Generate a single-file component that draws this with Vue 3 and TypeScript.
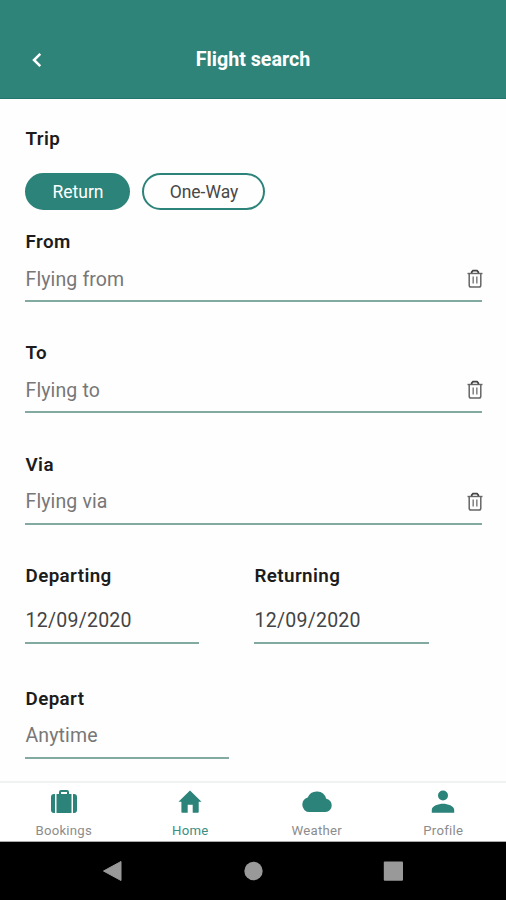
<script setup lang="ts">
import { ref } from 'vue'

interface Place {
  label: string
  hint: string
}

interface Tab {
  name: string
  width: number
  height: number
  path: string
}

const trips: string[] = ['Return', 'One-Way']
const trip = ref('Return')

const places: Place[] = [
  { label: 'From', hint: 'Flying from' },
  { label: 'To', hint: 'Flying to' },
  { label: 'Via', hint: 'Flying via' },
]

const dates = [
  { label: 'Departing', value: '12/09/2020' },
  { label: 'Returning', value: '12/09/2020' },
]

const tabs: Tab[] = [
  {
    name: 'Bookings',
    width: 28,
    height: 24,
    path: 'M5 4V23H4a3 3 0 0 1-3-3V7a3 3 0 0 1 3-3ZM6.500 4H9V2a2 2 0 0 1 2-2h6a2 2 0 0 1 2 2v2h2.500V23H6.500ZM11 2V4h6V2ZM23 4h1a3 3 0 0 1 3 3V20a3 3 0 0 1-3 3h-1Z',
  },
  {
    name: 'Home',
    width: 24,
    height: 24,
    path: 'M12 .5 23.500 11.700H20.700V22a.8.8 0 0 1-.8.8H14.700V14.800H9.700V22.800H4.200a.8.8 0 0 1-.8-.8V11.700H.5Z',
  },
  {
    name: 'Weather',
    width: 30,
    height: 24,
    path: 'M24.200 8.800A9.800 9.800 0 0 0 5.700 7.600 7.700 7.700 0 0 0 .3 14.500a7.300 7.300 0 0 0 7.400 7.600H23.400a6.600 6.600 0 0 0 6.300-6.700 6.500 6.500 0 0 0-5.500-6.600Z',
  },
  {
    name: 'Profile',
    width: 24,
    height: 24,
    path: 'M12 .5a5 5 0 1 0 0 10 5 5 0 0 0 0-10ZM12 13.800c-4.500 0-11.200 2.200-11.200 6v3h22.400v-3c0-3.800-6.700-6-11.200-6Z',
  },
]
const activeTab = ref('Home')
</script>

<template>
  <div class="screen">
    <header class="header">
      <button class="back" aria-label="Back">
        <svg width="12" height="16" viewBox="0 0 12 16">
          <path d="M9.300 1.800 3 8l6.300 6.200" fill="none" stroke="#fff" stroke-width="2.500" />
        </svg>
      </button>
      <h1 class="title">Flight search</h1>
    </header>

    <main class="form">
      <h2 class="label trip-label">Trip</h2>
      <div class="pills">
        <button
          v-for="t in trips"
          :key="t"
          class="pill"
          :class="{ selected: trip === t }"
          @click="trip = t"
        >{{ t }}</button>
      </div>

      <section v-for="p in places" :key="p.label" class="place">
        <h2 class="label">{{ p.label }}</h2>
        <div class="field">
          <span class="hint">{{ p.hint }}</span>
          <svg class="trash" width="16" height="20" viewBox="0 0 16 20" fill="none" stroke="#666">
            <path d="M.5 4.500H15.500" stroke-width="1.400" />
            <path d="M4.700 4V3L6 1.600H10L11.300 3V4" stroke-width="1.800" stroke="#444" />
            <path d="M2.200 5V16.200a1.800 1.800 0 0 0 1.800 1.800H12a1.800 1.800 0 0 0 1.800-1.800V5" stroke-width="1.500" />
            <path d="M6.200 7.500V14.500M9.800 7.500V14.500" stroke-width="1.600" stroke="#888" />
          </svg>
        </div>
      </section>

      <div class="dates">
        <section v-for="d in dates" :key="d.label">
          <h2 class="label">{{ d.label }}</h2>
          <div class="field date">{{ d.value }}</div>
        </section>
      </div>

      <section class="time">
        <h2 class="label">Depart</h2>
        <div class="field"><span class="hint">Anytime</span></div>
      </section>
    </main>

    <nav class="tabs">
      <button
        v-for="tab in tabs"
        :key="tab.name"
        class="tab"
        :class="{ active: activeTab === tab.name }"
        @click="activeTab = tab.name"
      >
        <svg :width="tab.width" :height="tab.height" :viewBox="`0 0 ${tab.width} ${tab.height}`">
          <path :d="tab.path" fill="#2b8379" fill-rule="evenodd" />
        </svg>
        <span>{{ tab.name }}</span>
      </button>
    </nav>

    <footer class="system">
      <svg width="20" height="22" viewBox="0 0 20 22">
        <path d="M18 1.500V20.500L.5 11Z" fill="#999" stroke="#999" stroke-linejoin="round" />
      </svg>
      <svg width="20" height="22" viewBox="0 0 20 22">
        <circle cx="10.500" cy="11" r="9.200" fill="#999" />
      </svg>
      <svg width="20" height="22" viewBox="0 0 20 22">
        <rect x=".8" y="1.500" width="19.200" height="19.200" rx="1" fill="#999" />
      </svg>
    </footer>
  </div>
</template>

<style>
body {
  margin: 0;
  background: #fff;
}
</style>

<style scoped>
.screen {
  display: flex;
  flex-direction: column;
  width: 506px;
  height: 900px;
  overflow: hidden;
  background: #fefefe;
  color: #1c1c1c;
  font-family: Roboto, sans-serif;
}
button {
  margin: 0;
  border: 0;
  padding: 0;
  background: none;
  font-family: inherit;
}
.header {
  display: grid;
  grid-template-columns: 50px 1fr 50px;
  align-items: center;
  box-sizing: border-box;
  height: 99px;
  padding-top: 21px;
  border-bottom: 1px solid #21766c;
  background: #2f847a;
  color: #fff;
}
.back {
  display: flex;
  justify-content: flex-end;
  padding: 1px 7px 0 0;
}
.title {
  margin: 0;
  font-size: 19.700px;
  font-weight: 700;
  line-height: 24px;
  text-align: center;
}
.form {
  flex: 1;
  box-sizing: border-box;
  padding: 27px 24px 0 25px;
}
.label {
  margin: 0;
  padding-left: 0.500px;
  font-size: 18.800px;
  font-weight: 600;
  line-height: 24px;
  letter-spacing: 0.400px;
}
.trip-label {
  padding-top: 1px;
}
.pills {
  display: flex;
  gap: 12px;
  height: 37px;
  margin: 22px 0 20px;
}
.pill {
  box-sizing: border-box;
  width: 123px;
  padding-left: 1px;
  border: 2px solid #2b8379;
  border-radius: 19px;
  color: #484848;
  font-size: 17.500px;
  letter-spacing: 0;
}
.pill.selected {
  width: 105px;
  background: #2b8379;
  color: #fff;
}
.place {
  height: 111.300px;
}
.field {
  display: flex;
  align-items: center;
  justify-content: space-between;
  box-sizing: border-box;
  height: 48px;
  padding: 4px 0 0 0.500px;
  border-bottom: 2px solid #82aaa1;
  font-size: 19.500px;
  letter-spacing: 0.120px;
}
.trash {
  margin-right: -1px;
}
.hint {
  color: #777;
}
.date {
  letter-spacing: 0.250px;
}
.dates {
  display: grid;
  grid-template-columns: 174px 175px;
  column-gap: 55px;
  height: 123px;
}
.field.date {
  height: 56px;
  padding-top: 12px;
  color: #444;
}
.time {
  width: 204px;
}
.tabs {
  display: grid;
  grid-template-columns: repeat(4, 1fr);
  box-sizing: border-box;
  height: 61px;
  border-top: 2px solid #f0f1f1;
  border-bottom: 1px solid #aaa;
  background: #fff;
}
.tab {
  display: flex;
  flex-direction: column;
  align-items: center;
  padding: 7px 0 0 1px;
  color: #8c8c8c;
  font-size: 13.200px;
  line-height: 16px;
  letter-spacing: 0.250px;
}
.tab span {
  margin-top: 9px;
}
.tab.active {
  color: #3b8d83;
}
.system {
  display: flex;
  justify-content: center;
  gap: 120px;
  box-sizing: border-box;
  height: 58px;
  padding-top: 18px;
  background: #000;
}
</style>
